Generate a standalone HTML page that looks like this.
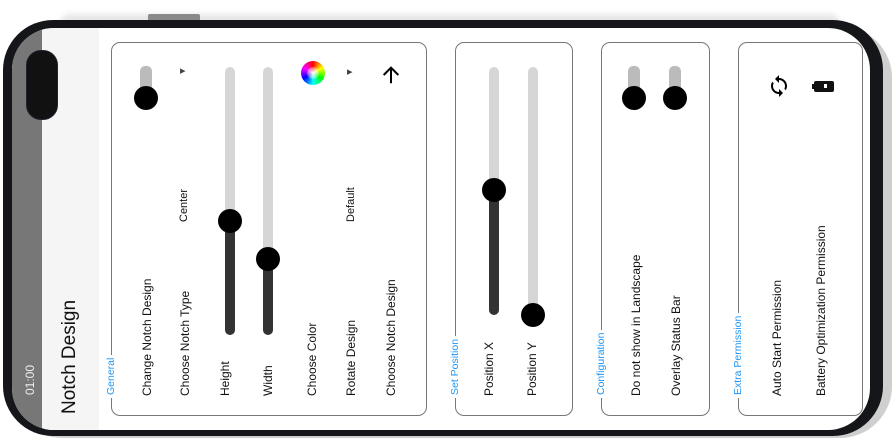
<!DOCTYPE html><html><head><style>
body{margin:0;width:896px;height:441px;background:#fff;position:relative;overflow:hidden;font-family:"Liberation Sans",sans-serif}
.a{position:absolute}
.r{position:absolute;transform:rotate(-90deg);transform-origin:0 0;white-space:nowrap;font-size:12px;line-height:14px;color:#111}
.card{position:absolute;border:1px solid #777;border-radius:9px;top:42px;height:372px}
.lbl{color:#2196f3;font-size:10.5px;background:#fff;padding:0 3px}
.trk{position:absolute;width:10px;border-radius:5px;background:#d6d6d6}
.dk{position:absolute;width:10px;border-radius:5px;background:#333}
.th{position:absolute;width:24px;height:24px;border-radius:50%;background:#000}
</style></head><body>
<div class="a" style="left:60px;top:14px;width:780px;height:20px;background:#e6e6e6;border-radius:20px;filter:blur(3px)"></div>
<div class="a" style="left:148px;top:14px;width:52px;height:10px;background:#8a8a8a;border-radius:2px"></div>
<div class="a" style="left:10px;top:26px;width:882px;height:412px;background:#cfcfcf;border-radius:52px"></div>
<div class="a" style="left:3px;top:20px;width:880px;height:416px;background:#15161a;border-radius:50px"></div>
<div class="a" style="left:12px;top:28px;width:858px;height:402px;background:#fff;border-radius:42px;overflow:hidden">
 <div class="a" style="left:0;top:0;width:30px;height:402px;background:#777"></div>
 <div class="a" style="left:30px;top:0;width:57px;height:402px;background:#f5f5f5"></div>
</div>
<div class="a" style="left:26px;top:50px;width:30px;height:68px;background:#111;border-radius:15px;border:1px solid #223"></div>
<div class="r" style="left:23px;top:395px;color:#eee;font-size:12px">01:00</div>
<div class="r" style="left:59px;top:414px;font-size:19px;line-height:22px">Notch Design</div>

<div class="card" style="left:111px;width:314px"></div>
<div class="card" style="left:455px;width:116px"></div>
<div class="card" style="left:601px;width:107px"></div>
<div class="card" style="left:738px;width:123px"></div>
<div class="r lbl" style="left:104px;top:398px">General</div>
<div class="r lbl" style="left:448px;top:398px">Set Position</div>
<div class="r lbl" style="left:594px;top:398px">Configuration</div>
<div class="r lbl" style="left:731px;top:398px">Extra Permission</div>

<div class="r" style="left:140px;top:396px">Change Notch Design</div>
<div class="r" style="left:178px;top:396px">Choose Notch Type</div>
<div class="r" style="left:218px;top:396px">Height</div>
<div class="r" style="left:261px;top:396px">Width</div>
<div class="r" style="left:305px;top:396px">Choose Color</div>
<div class="r" style="left:344px;top:396px">Rotate Design</div>
<div class="r" style="left:384px;top:396px">Choose Notch Design</div>
<div class="r" style="left:177px;top:222px;font-size:11px">Center</div>
<div class="r" style="left:344px;top:222px;font-size:11px">Default</div>
<div class="r" style="left:482px;top:396px">Position X</div>
<div class="r" style="left:525px;top:396px">Position Y</div>
<div class="r" style="left:629px;top:396px">Do not show in Landscape</div>
<div class="r" style="left:669px;top:396px">Overlay Status Bar</div>
<div class="r" style="left:770px;top:396px">Auto Start Permission</div>
<div class="r" style="left:814px;top:396px">Battery Optimization Permission</div>

<div class="trk" style="left:140px;top:66px;height:34px;width:12px;background:#bbb"></div><div class="th" style="left:134px;top:86px"></div>
<div class="trk" style="left:628px;top:66px;height:34px;width:12px;background:#bbb"></div><div class="th" style="left:622px;top:86px"></div>
<div class="trk" style="left:669px;top:66px;height:34px;width:12px;background:#bbb"></div><div class="th" style="left:663px;top:86px"></div>
<div class="trk" style="left:225px;top:67px;height:268px"></div><div class="dk" style="left:225px;top:221px;height:114px"></div><div class="th" style="left:218px;top:209px"></div>
<div class="trk" style="left:263px;top:67px;height:268px"></div><div class="dk" style="left:263px;top:259px;height:76px"></div><div class="th" style="left:256px;top:247px"></div>
<div class="trk" style="left:489px;top:67px;height:248px"></div><div class="dk" style="left:489px;top:190px;height:125px"></div><div class="th" style="left:482px;top:178px"></div>
<div class="trk" style="left:528px;top:67px;height:250px"></div><div class="th" style="left:521px;top:303px"></div>
<div class="a" style="left:180px;top:64px;font-size:11px;color:#444">▸</div>
<div class="a" style="left:347px;top:65px;font-size:11px;color:#444">▸</div>
<div class="a" style="left:301px;top:61px;width:24px;height:24px;border-radius:50%;background:conic-gradient(red,yellow,lime,cyan,blue,magenta,red)"><div style="margin:6px;width:12px;height:12px;border-radius:50%;background:radial-gradient(#fff,rgba(255,255,255,0))"></div></div>
<svg class="a" style="left:380px;top:64px" width="22" height="22" viewBox="0 0 24 24"><path d="M12 21V4M4 12l8-8 8 8" fill="none" stroke="#000" stroke-width="2.2"/></svg>
<svg class="a" style="left:767px;top:74px" width="24" height="24" viewBox="0 0 24 24"><path d="M12 4V1L8 5l4 4V6c3.3 0 6 2.7 6 6 0 1-.25 2-.7 2.8l1.46 1.46C19.54 15.030 20 13.57 20 12c0-4.42-3.58-8-8-8zm0 14c-3.3 0-6-2.7-6-6 0-1 .25-2 .7-2.8L5.24 7.74C4.46 8.97 4 10.430 4 12c0 4.42 3.58 8 8 8v3l4-4-4-4v3z"/></svg>
<div class="a" style="left:814px;top:81px;width:20px;height:11px;background:#111;border-radius:2px"></div>
<div class="a" style="left:812px;top:84px;width:3px;height:5px;background:#111"></div>
<div class="a" style="left:824px;top:84px;width:3px;height:4px;background:#fff"></div>
</body></html>
